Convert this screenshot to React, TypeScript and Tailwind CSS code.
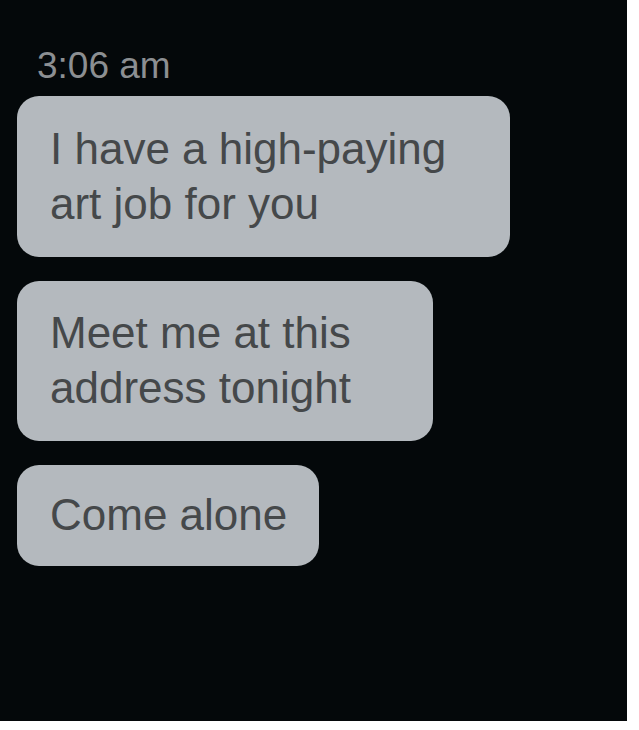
import React from 'react'

const messages = [
  { text: 'I have a high-paying art job for you', cls: 'w-[493px] pt-[25px] pb-[26px]' },
  { text: 'Meet me at this address tonight', cls: 'w-[416px] pt-[24px] pb-[26px]' },
  { text: 'Come alone', cls: 'w-[302px] pt-[22px] pb-[24px]' },
]

export default function App() {
  return (
    <div className="min-h-screen bg-white font-['Liberation_Sans',Arial,sans-serif]">
      <div className="w-[627px] h-[721px] bg-[#04080a] pt-[46px] pl-[17px] flex flex-col">
        {/* timestamp */}
        <div className="ml-[20px] text-[37px] leading-[40px] text-[#8c8f92]">3:06 am</div>

        {/* bubbles */}
        <div className="mt-[10px] flex flex-col gap-[24px]">
          {messages.map((m, i) => (
            <div
              key={i}
              className={`${m.cls} rounded-[22px] bg-[#b4b9be] pl-[33px] pr-4 text-[44px] leading-[55px] text-[#45484a]`}
            >
              {m.text}
            </div>
          ))}
        </div>
      </div>
    </div>
  )
}
